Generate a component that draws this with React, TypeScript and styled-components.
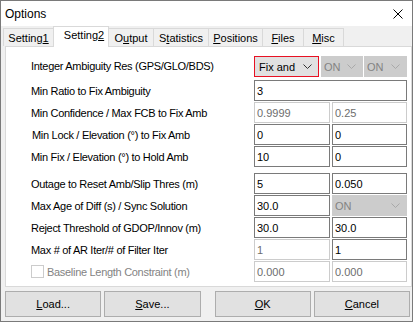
import React from "react";
import styled, { createGlobalStyle, css } from "styled-components";

const GlobalStyle = createGlobalStyle`
  html, body { margin: 0; padding: 0; background: #ffffff; }
  body { font-family: "Liberation Sans", Arial, sans-serif; font-size: 11px; color: #000; }
  #root { width: 413px; height: 322px; }
`;

const Window = styled.div`
  width: 413px;
  height: 322px;
  box-sizing: border-box;
  border: 1px solid #7a7a7a;
  display: flex;
  flex-direction: column;
  background: #f0f0f0;
`;

const TitleBar = styled.div`
  height: 25px;
  flex: none;
  background: #ffffff;
  display: flex;
  align-items: center;
  justify-content: space-between;
  padding: 0 9px 0 4px;
`;

const Title = styled.span`
  font-size: 12px;
  line-height: 14px;
`;

const Body = styled.div`
  flex: 1;
  display: flex;
  flex-direction: column;
  padding: 0 2px 0 2px;
`;

const TabStrip = styled.div`
  height: 20px;
  display: flex;
  align-items: flex-end;
  position: relative;
  z-index: 1;
`;

const Tab = styled.div<{ $w: number; $active?: boolean }>`
  box-sizing: border-box;
  width: ${(p) => p.$w}px;
  height: 18px;
  border: 1px solid #d9d9d9;
  border-bottom: none;
  background: #f0f0f0;
  display: flex;
  align-items: center;
  justify-content: center;
  line-height: 13px;
  padding-top: 1px;
  white-space: nowrap;
  & + & { margin-left: -1px; }
  ${(p) =>
    p.$active &&
    css`
      height: 21px;
      margin-bottom: -1px;
      background: #ffffff;
      padding: 0 0 3px 6px;
      position: relative;
      z-index: 2;
    `}
`;

const Key = styled.span`
  text-decoration: underline;
`;

const Panel = styled.div`
  box-sizing: border-box;
  width: 407px;
  height: 241px;
  margin-left: 2px;
  background: #ffffff;
  border: 1px solid #d9d9d9;
  padding: 9px 4px 4px 25px;
  display: flex;
  flex-direction: column;
`;

const Row = styled.div<{ $gap: number }>`
  display: grid;
  grid-template-columns: 1fr 76px 75px;
  column-gap: 2px;
  height: 21px;
  align-items: center;
  margin-top: ${(p) => p.$gap}px;
`;

const Label = styled.div<{ $indent?: number; $dim?: boolean; $raise?: number }>`
  padding-left: ${(p) => p.$indent ?? 0}px;
  margin-top: ${(p) => -(p.$raise ?? 0)}px;
  white-space: nowrap;
  letter-spacing: -0.3px;
  display: flex;
  align-items: center;
  color: ${(p) => (p.$dim ? "#838383" : "#000")};
`;

const Field = styled.input`
  box-sizing: border-box;
  width: 100%;
  height: 21px;
  margin: 0;
  border: 1px solid #7a7a7a;
  padding: 0 0 0 2px;
  font-family: inherit;
  font-size: 11px;
  color: #000;
  background: #ffffff;
  outline: none;
  &:disabled {
    border-color: #cccccc;
    color: #6d6d6d;
    background: #ffffff;
  }
`;

const Wide = styled.div`
  grid-column: 2 / span 2;
`;

const ComboGroup = styled.div`
  grid-column: 2 / span 2;
  display: flex;
  height: 21px;
`;

const Combo = styled.div<{ $w: number; $disabled?: boolean; $focused?: boolean; $ml?: number }>`
  box-sizing: border-box;
  width: ${(p) => p.$w}px;
  height: 21px;
  margin-left: ${(p) => p.$ml ?? 0}px;
  border: 1px solid #adadad;
  background: #e1e1e1;
  display: flex;
  align-items: center;
  padding: 0 6px 0 2px;
  color: #000;
  ${(p) =>
    p.$focused &&
    css`
      border-color: #e81123;
      padding-left: 4px;
    `}
  ${(p) =>
    p.$disabled &&
    css`
      border-color: #cccccc;
      background: #cccccc;
      color: #838383;
    `}
`;

const ComboText = styled.span<{ $clip?: number }>`
  flex: 1;
  white-space: nowrap;
  overflow: hidden;
  ${(p) =>
    p.$clip &&
    css`
      flex: none;
      width: ${p.$clip}px;
      margin-right: auto;
    `}
`;

const Chevron = styled.svg<{ $disabled?: boolean }>`
  flex: none;
  width: 9px;
  height: 5px;
  stroke: ${(p) => (p.$disabled ? "#a9a9a9" : "#333333")};
`;

const CheckBox = styled.span`
  box-sizing: border-box;
  width: 13px;
  height: 13px;
  border: 1px solid #cccccc;
  background: #ffffff;
  margin-right: 3px;
`;

const ButtonBar = styled.div`
  display: flex;
  margin-top: 4px;
  padding-left: 2px;
`;

const Button = styled.button<{ $ml?: number }>`
  box-sizing: border-box;
  width: 97px;
  height: 26px;
  margin: 0 0 0 ${(p) => p.$ml ?? 0}px;
  border: 1px solid #adadad;
  background: #e1e1e1;
  font-family: inherit;
  font-size: 11px;
  color: #000;
  padding: 0;
`;

const CloseIcon = () => (
  <svg width="10" height="10" viewBox="0 0 10 10">
    <path d="M0.5 0.5 L9.5 9.5 M9.5 0.5 L0.5 9.5" stroke="#000" strokeWidth="1" />
  </svg>
);

const ChevronIcon = ({ disabled }: { disabled?: boolean }) => (
  <Chevron $disabled={disabled} viewBox="0 0 9 5" fill="none">
    <polyline points="0.5,0.5 4.5,4.5 8.5,0.5" strokeWidth="1" />
  </Chevron>
);

type Cell =
  | { kind: "input"; value: string; disabled?: boolean }
  | { kind: "combo"; value: string; disabled?: boolean };

type RowDef = {
  label: string;
  gap: number;
  indent?: number;
  check?: boolean;
  cells: Cell[];
};

const rows: RowDef[] = [
  { label: "Min Ratio to Fix Ambiguity", gap: 3, cells: [{ kind: "input", value: "3" }] },
  {
    label: "Min Confidence / Max FCB to Fix Amb",
    gap: 1,
    cells: [
      { kind: "input", value: "0.9999", disabled: true },
      { kind: "input", value: "0.25", disabled: true },
    ],
  },
  {
    label: "Min Lock / Elevation (°) to Fix Amb",
    gap: 1,
    indent: 1,
    cells: [
      { kind: "input", value: "0" },
      { kind: "input", value: "0" },
    ],
  },
  {
    label: "Min Fix / Elevation (°) to Hold Amb",
    gap: 1,
    cells: [
      { kind: "input", value: "10" },
      { kind: "input", value: "0" },
    ],
  },
  {
    label: "Outage to Reset Amb/Slip Thres (m)",
    gap: 6,
    cells: [
      { kind: "input", value: "5" },
      { kind: "input", value: "0.050" },
    ],
  },
  {
    label: "Max Age of Diff (s) / Sync Solution",
    gap: 1,
    cells: [
      { kind: "input", value: "30.0" },
      { kind: "combo", value: "ON", disabled: true },
    ],
  },
  {
    label: "Reject Threshold of GDOP/Innov (m)",
    gap: 1,
    cells: [
      { kind: "input", value: "30.0" },
      { kind: "input", value: "30.0" },
    ],
  },
  {
    label: "Max # of AR Iter/# of Filter Iter",
    gap: 1,
    cells: [
      { kind: "input", value: "1", disabled: true },
      { kind: "input", value: "1" },
    ],
  },
  {
    label: "Baseline Length Constraint (m)",
    gap: 1,
    check: true,
    cells: [
      { kind: "input", value: "0.000", disabled: true },
      { kind: "input", value: "0.000", disabled: true },
    ],
  },
];

const tabs: { pre: string; key: string; post: string; w: number; active?: boolean }[] = [
  { pre: "Setting", key: "1", post: "", w: 51 },
  { pre: "Setting", key: "2", post: "", w: 56, active: true },
  { pre: "O", key: "u", post: "tput", w: 46 },
  { pre: "S", key: "t", post: "atistics", w: 56 },
  { pre: "", key: "P", post: "ositions", w: 55 },
  { pre: "", key: "F", post: "iles", w: 42 },
  { pre: "", key: "M", post: "isc", w: 41 },
];

const renderCell = (c: Cell, i: number) => {
  if (c.kind === "combo") {
    return (
      <Combo key={i} $w={75} $disabled={c.disabled}>
        <ComboText>{c.value}</ComboText>
        <ChevronIcon disabled={c.disabled} />
      </Combo>
    );
  }
  return <Field key={i} readOnly disabled={c.disabled} value={c.value} />;
};

export default function App() {
  return (
    <>
      <GlobalStyle />
      <Window>
        <TitleBar>
          <Title>Options</Title>
          <CloseIcon />
        </TitleBar>
        <Body>
          <TabStrip>
            {tabs.map((t) => (
              <Tab key={t.pre + t.key} $w={t.w} $active={t.active}>
                <span>
                  {t.pre}
                  <Key>{t.key}</Key>
                  {t.post}
                </span>
              </Tab>
            ))}
          </TabStrip>
          <Panel>
            <Row $gap={0}>
              <Label $raise={2}>Integer Ambiguity Res (GPS/GLO/BDS)</Label>
              <ComboGroup>
                <Combo $w={65} $focused>
                  <ComboText $clip={39}>Fix and Hold</ComboText>
                  <ChevronIcon />
                </Combo>
                <Combo $w={42} $ml={2} $disabled>
                  <ComboText>ON</ComboText>
                  <ChevronIcon disabled />
                </Combo>
                <Combo $w={43} $ml={1} $disabled>
                  <ComboText>ON</ComboText>
                  <ChevronIcon disabled />
                </Combo>
              </ComboGroup>
            </Row>
            {rows.map((r) => (
              <Row key={r.label} $gap={r.gap}>
                <Label $indent={r.indent} $dim={r.check}>
                  {r.check && <CheckBox />}
                  {r.label}
                </Label>
                {r.cells.length === 1 ? (
                  <Wide>{renderCell(r.cells[0], 0)}</Wide>
                ) : (
                  r.cells.map(renderCell)
                )}
              </Row>
            ))}
          </Panel>
          <ButtonBar>
            <Button>
              <Key>L</Key>oad...
            </Button>
            <Button $ml={3}>
              <Key>S</Key>ave...
            </Button>
            <Button $ml={14}>
              <Key>O</Key>K
            </Button>
            <Button $ml={3}>
              <Key>C</Key>ancel
            </Button>
          </ButtonBar>
        </Body>
      </Window>
    </>
  );
}
